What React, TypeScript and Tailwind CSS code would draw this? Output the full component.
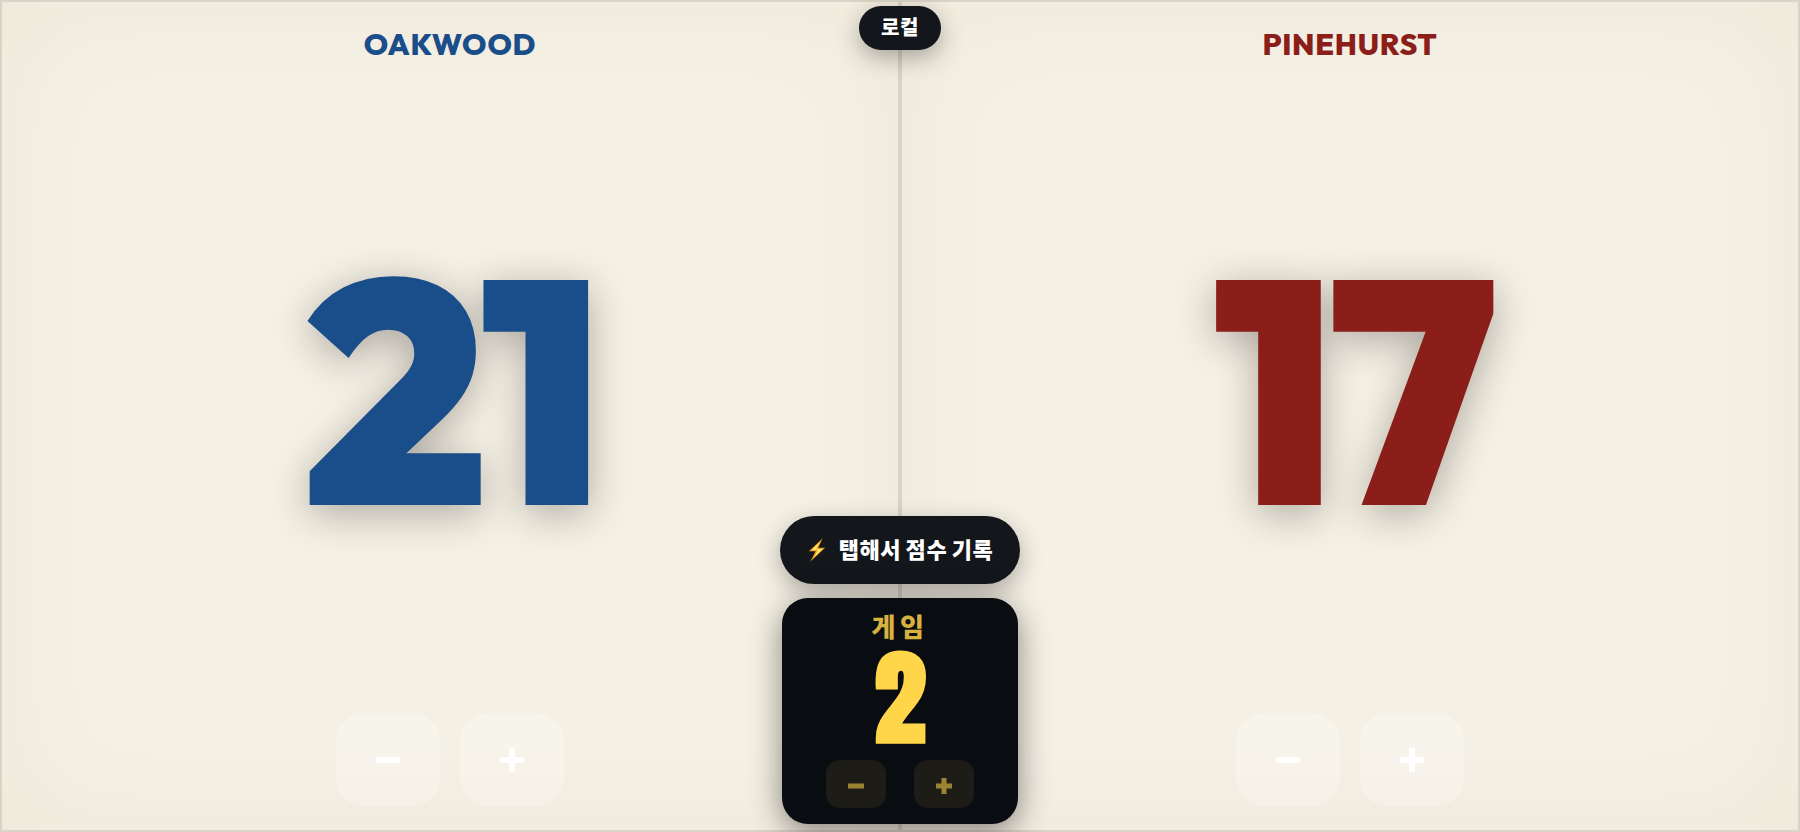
import { useState } from "react";

type TeamProps = {
  name: string;
  start: number;
  color: string;
};

function Sign({ plus, className }: { plus?: boolean; className: string }) {
  return (
    <svg viewBox="0 0 24 24" className={className} fill="currentColor" aria-hidden="true">
      <rect x="0" y="9" width="24" height="6" rx="1" />
      {plus && <rect x="9" y="0" width="6" height="24" rx="1" />}
    </svg>
  );
}

function HeavySign({ plus }: { plus?: boolean }) {
  return (
    <svg viewBox="0 0 16 16" className="mt-1 size-4" fill="currentColor" aria-hidden="true">
      <rect x="0" y="5.5" width="16" height="5" />
      {plus && <rect x="5.5" y="0" width="5" height="16" />}
    </svg>
  );
}

function Bolt() {
  return (
    <svg viewBox="0 0 18 24" className="h-6 w-5" aria-hidden="true">
      <path d="M14.5 0.5 0.8 13.2h6.8L2.4 23.5 17.2 9.8h-7z" fill="#f0a020" />
      <path d="M12.6 3.4 3.6 12h6.2l-3.6 7.2 8.4-8.3H8.2z" fill="#ffe56b" />
    </svg>
  );
}

function Team({ name, start, color }: TeamProps) {
  const [score, setScore] = useState<number>(start);
  const button =
    "flex h-[93px] w-[104px] items-center justify-center rounded-[28px] bg-white/25 text-white";

  return (
    <section
      className={`flex flex-col items-center justify-between border-2 border-[#dad3c7] bg-[#f5f0e4] pt-6 pb-6 shadow-[inset_0_0_120px_rgba(90,50,20,0.04)] ${color}`}
    >
      <h2 className="text-[30px] leading-9 font-extrabold tracking-wide">{name}</h2>
      <p className="text-[316px] leading-[356px] font-black tracking-[-0.03em] [text-shadow:0_8px_40px_rgba(0,0,0,0.3)]">
        {score}
      </p>
      <div className="flex gap-5">
        <button
          aria-label={`${name} −`}
          onClick={() => setScore((prev) => Math.max(0, prev - 1))}
          className={button}
        >
          <Sign className="size-6" />
        </button>
        <button
          aria-label={`${name} +`}
          onClick={() => setScore((prev) => prev + 1)}
          className={button}
        >
          <Sign plus className="size-6" />
        </button>
      </div>
    </section>
  );
}

function GameCard() {
  const [game, setGame] = useState<number>(2);
  const button =
    "flex h-12 w-[60px] items-center justify-center rounded-[14px] bg-[#1e1c17] text-[#9c8334]";

  return (
    <div className="flex w-[236px] flex-col items-center rounded-[26px] bg-[#090c10] pt-3 pb-4 shadow-[0_8px_32px_rgba(0,0,0,0.45)]">
      <span className="text-[26px] leading-9 font-black tracking-[0.18em] text-[#d8b23f]">
        게임
      </span>
      <span className="mt-1 font-['Anton',sans-serif] text-[104px] leading-[96px] font-black text-[#ffd54a]">
        {game}
      </span>
      <div className="mt-3.5 flex gap-7">
        <button
          aria-label="게임 −"
          onClick={() => setGame((prev) => Math.max(1, prev - 1))}
          className={button}
        >
          <HeavySign />
        </button>
        <button
          aria-label="게임 +"
          onClick={() => setGame((prev) => prev + 1)}
          className={button}
        >
          <HeavySign plus />
        </button>
      </div>
    </div>
  );
}

function App() {
  return (
    <main className="relative grid min-h-screen grid-cols-2 font-['Outfit','Inter','Noto_Sans_CJK_KR',sans-serif]">
      <Team name="OAKWOOD" start={21} color="text-[#1a4e8a]" />
      <Team name="PINEHURST" start={17} color="text-[#8b1e18]" />

      <div className="pointer-events-none absolute inset-0 flex flex-col items-center justify-between pt-1.5 pb-2">
        <button className="pointer-events-auto rounded-full bg-[#13161b] px-[22px] py-2 text-xl leading-7 font-black tracking-wide text-white shadow-[0_8px_24px_rgba(0,0,0,0.3)]">
          로컬
        </button>
        <div className="pointer-events-auto flex flex-col items-center gap-3.5">
          <button className="flex h-[68px] w-[240px] items-center justify-center gap-3 rounded-full bg-[#13161b] text-[22px] leading-8 font-black tracking-wide text-white shadow-[0_8px_24px_rgba(0,0,0,0.3)]">
            <Bolt />
            탭해서 점수 기록
          </button>
          <GameCard />
        </div>
      </div>
    </main>
  );
}

export default App;
